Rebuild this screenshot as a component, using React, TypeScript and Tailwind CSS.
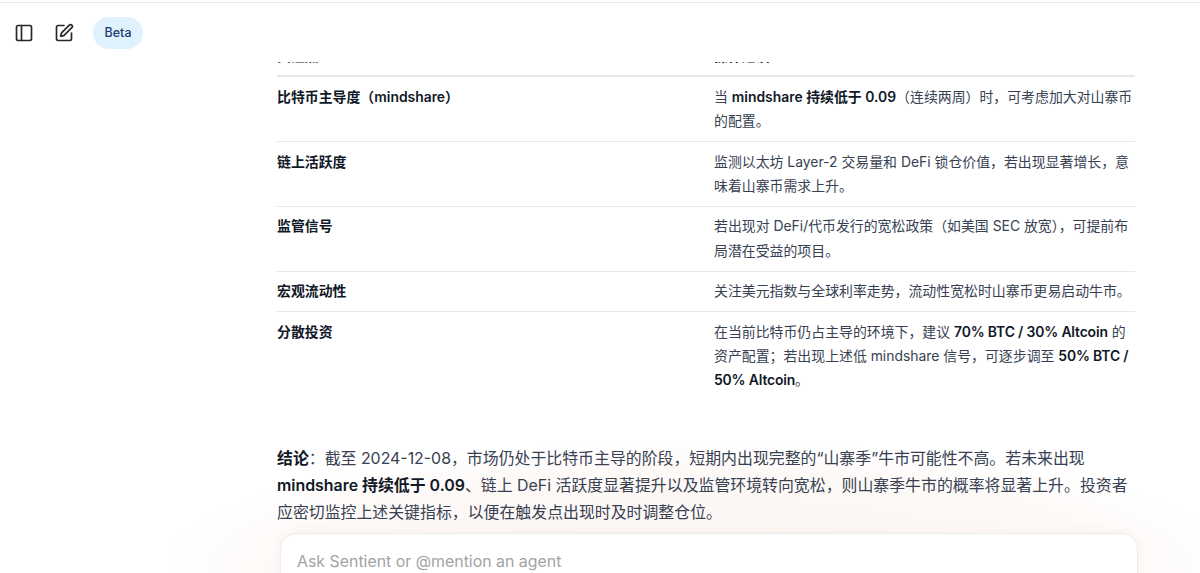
import { PanelLeft, SquarePen } from "lucide-react"
import type { ReactNode } from "react"

const rows: { label: string; body: ReactNode }[] = [
  {
    label: "比特币主导度（mindshare）",
    body: (
      <>
        当 <strong className="font-semibold text-[#111827]">mindshare 持续低于 0.09</strong>（连续两周）时，可考虑加大对山寨币的配置。
      </>
    ),
  },
  {
    label: "链上活跃度",
    body: "监测以太坊 Layer-2 交易量和 DeFi 锁仓价值，若出现显著增长，意味着山寨币需求上升。",
  },
  {
    label: "监管信号",
    body: "若出现对 DeFi/代币发行的宽松政策（如美国 SEC 放宽），可提前布局潜在受益的项目。",
  },
  {
    label: "宏观流动性",
    body: "关注美元指数与全球利率走势，流动性宽松时山寨币更易启动牛市。",
  },
  {
    label: "分散投资",
    body: (
      <>
        在当前比特币仍占主导的环境下，建议 <strong className="font-semibold tracking-[-0.15px] text-[#111827]">70% BTC / 30% Altcoin</strong> 的资产配置；若出现上述低 mindshare 信号，可逐步调至 <strong className="font-semibold tracking-[-0.15px] text-[#111827]">50% BTC / 50% Altcoin</strong>。
      </>
    ),
  },
]

export default function App() {
  return (
    <div className="relative flex h-[573px] w-[1200px] flex-col overflow-hidden bg-white pt-[2px] font-['Inter','Noto_Sans_CJK_SC',sans-serif] text-[#374151]">
      {/* Top bar */}
      <header className="flex h-[60px] shrink-0 items-start border-t border-[#e5e7eb] pl-[14px] pt-[14px]">
        <button className="flex h-[32px] w-[20px] items-center justify-center text-[#27272a]">
          <PanelLeft size={20} strokeWidth={2} />
        </button>
        <button className="ml-[20px] flex h-[32px] w-[20px] items-center justify-center text-[#27272a]">
          <SquarePen size={20} strokeWidth={2} />
        </button>
        <span className="ml-[19px] flex h-[32px] w-[50px] items-center justify-center rounded-full bg-[#e0f2fe] text-[12.5px] font-medium text-[#1e3a6e]">
          Beta
        </span>
      </header>

      {/* Glow behind the composer */}
      <div className="pointer-events-none absolute bottom-[-120px] left-[170px] h-[250px] w-[1060px] bg-[radial-gradient(ellipse_at_center,#fcf5f2_0%,#fdf9f7_55%,transparent_72%)]" />

      {/* Scrolling message */}
      <main className="relative min-h-0 flex-1 overflow-hidden pl-[277px]">
        <div className="-mt-[27px] w-[858px]">
          <table className="w-full table-fixed border-collapse text-[13.9px] leading-[24.3px]">
            <thead>
              <tr className="border-b-2 border-[#e5e7eb] text-left font-semibold text-[#111827]">
                <th className="w-[437px] pb-[7px] pr-2 pt-[9px] font-semibold">关注点</th>
                <th className="pb-[7px] pt-[9px] font-semibold">操作建议</th>
              </tr>
            </thead>
            <tbody>
              {rows.map((row) => (
                <tr key={row.label} className="border-b border-[#e5e7eb] align-top last:border-b-0">
                  <td className="py-[7.6px] pr-2 font-semibold text-[#111827]">{row.label}</td>
                  <td className="py-[7.6px]">{row.body}</td>
                </tr>
              ))}
            </tbody>
          </table>

          <p className="mt-[45px] text-[15.9px] leading-[27px]">
            <strong className="font-semibold text-[#111827]">结论</strong>：截至 2024-12-08，市场仍处于比特币主导的阶段，短期内出现完整的“山寨季”牛市可能性不高。若未来出现{" "}
            <strong className="font-semibold text-[#111827]">mindshare 持续低于 0.09</strong>、链上 DeFi 活跃度显著提升以及监管环境转向宽松，则山寨季牛市的概率将显著上升。投资者应密切监控上述关键指标，以便在触发点出现时及时调整仓位。
          </p>
        </div>
      </main>

      {/* Composer */}
      <div className="absolute left-[280px] top-[533px] h-[80px] w-[858px] rounded-2xl border border-[#ececec] bg-white px-4 pt-[16px] text-[15.9px] leading-6 text-[#a3a3a3] shadow-[0_0_12px_rgba(120,90,80,0.05)]">
        Ask Sentient or @mention an agent
      </div>
    </div>
  )
}
